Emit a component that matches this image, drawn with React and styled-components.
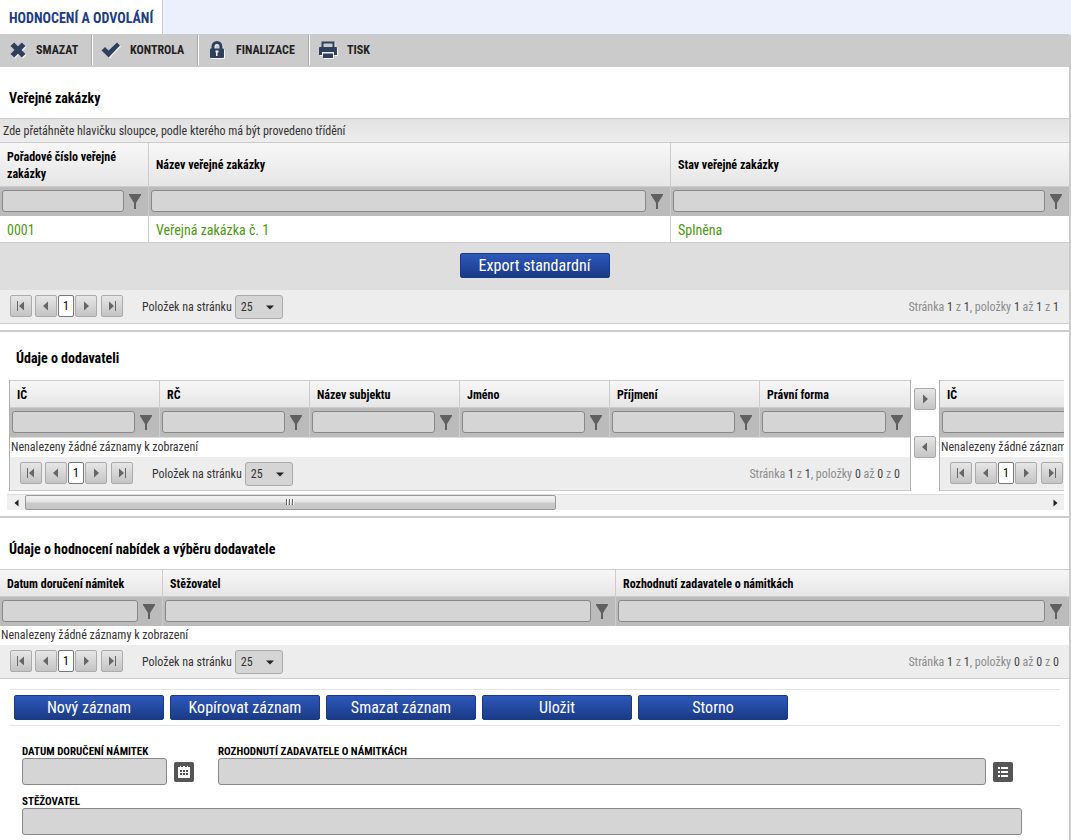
import React from 'react'
import styled, { createGlobalStyle, css } from 'styled-components'

const GlobalStyle = createGlobalStyle`
  * {
    box-sizing: border-box;
  }

  body {
    margin: 0;
    background: #fff;
    color: #333;
    font-family: 'Roboto Condensed', 'Liberation Sans Narrow', Roboto, sans-serif;
    font-size: 12px;
    line-height: 17px;
  }

  button, input, select {
    margin: 0;
    font-family: inherit;
  }
`

const TabBar = styled.nav`
  display: flex;
  height: 34px;
  background: #ebf0fc;
`

const Tab = styled.a`
  padding: 0 9px;
  border-right: 1px solid #c8c8c8;
  background: #fff;
  color: #1f3c85;
  font-size: 14px;
  font-weight: bold;
  line-height: 36px;
  text-decoration: none;
  text-transform: uppercase;
  white-space: nowrap;
`

const Toolbar = styled.div`
  display: flex;
  height: 33px;
  padding: 1px 0 2px;
  border-radius: 0 3px 0 0;
  background: #cbcbcb;
`

const ToolButton = styled.button`
  display: flex;
  align-items: center;
  gap: 9px;
  width: ${props => props.$width}px;
  padding: 0 0 0 9px;
  border: 0;
  border-right: 1px solid #a9a9a9;
  box-shadow: 1px 0 0 #fff;
  background: transparent;
  color: #222;
  font-size: 12px;
  font-weight: bold;
  text-transform: uppercase;

  &:last-child {
    border-right: 0;
    box-shadow: none;
  }

  svg {
    flex: none;
    filter: drop-shadow(1px 1px 0 #f4f4f4);
  }
`

const Page = styled.main`
  min-height: calc(100vh - 67px);
  border-right: 2px solid #ccc;
`

const Section = styled.section`
  border-bottom: 2px solid #ccc;
  padding-bottom: 6px;

  &:last-child {
    border-bottom: 0;
    padding-bottom: 4px;
  }
`

const Title = styled.h2`
  margin: 0;
  padding: ${props => props.$compact ? '16px 16px 12px' : '21px 9px 10px'};
  color: #000;
  font-size: 14px;
  font-weight: bold;
  line-height: 20px;
`

const GroupBar = styled.div`
  height: 24px;
  padding: 0 3px;
  border-top: 1px solid #ccc;
  background: linear-gradient(#e2e2e2, #ededed);
  line-height: 24px;
`

const Table = styled.table`
  width: 100%;
  border-collapse: separate;
  border-spacing: 0;
  table-layout: fixed;
`

const HeadCell = styled.th`
  height: ${props => props.$tall ? 45 : 28}px;
  padding: 2px 30px 0 7px;
  border: solid #ccc;
  border-width: 1px 1px 1px 0;
  background: linear-gradient(#f7f7f7, #e6e6e6);
  color: #000;
  font-size: 12px;
  font-weight: bold;
  text-align: left;

  &:last-child {
    border-right: 0;
  }
`

const FilterCell = styled.td`
  height: ${props => props.$lined ? 30 : 29}px;
  padding: 0 7px 1px 2px;
  border-right: 1px solid #ccc;
  border-bottom: ${props => props.$lined ? '1px solid #ddd' : 0};
  background: #bbb;

  &:last-child {
    border-right: 0;
  }

  div {
    display: flex;
    align-items: center;
    gap: 5px;
  }

  svg {
    flex: none;
  }
`

const field = css`
  border: 1px solid #888;
  border-radius: 3px;
  background: #d5d5d5;
  color: #333;
  font-size: 12px;
`

const FilterInput = styled.input`
  ${field}
  flex: 1;
  min-width: 0;
  height: 22px;
  padding: 0 4px;
`

const DataCell = styled.td`
  height: 27px;
  padding: 2px 7px 0;
  border-right: 1px solid #ccc;
  border-bottom: 1px solid #ccc;
  color: #4a9a0c;
  font-size: 14px;

  &:last-child {
    border-right: 0;
  }
`

const EmptyCell = styled.td`
  height: 19px;
  padding: 0 1px;
  white-space: nowrap;
`

const ExportBar = styled.div`
  display: flex;
  justify-content: center;
  padding: 10px 0 12px;
  background: #dedede;
`

const BlueButton = styled.button`
  width: 150px;
  height: 25px;
  padding: 0;
  border: 1px solid #1a3a85;
  border-radius: 2px;
  background: linear-gradient(#2d58bb, #1a3a85);
  color: #fff;
  font-size: 16px;
  line-height: 23px;
`

const PagerBar = styled.div`
  display: flex;
  align-items: flex-start;
  height: 34px;
  padding: 5px 10px 0;
  border-bottom: 1px solid #ccc;
  background: #ededed;
  line-height: 24px;
  white-space: nowrap;
`

const PagerButtons = styled.div`
  display: flex;
  gap: ${props => props.$gap}px;
  margin-right: ${props => props.$after || 0}px;
`

const ArrowButton = styled.button`
  display: flex;
  flex: none;
  align-items: center;
  justify-content: center;
  width: 22px;
  height: 22px;
  padding: 0;
  border: 1px solid #ababab;
  border-radius: 2px;
  background: linear-gradient(#e6e6e6, #c4c4c4);
`

const PageNumber = styled.button`
  flex: none;
  width: 16px;
  height: 22px;
  margin-right: 1px;
  padding: 0;
  border: 1px solid #777;
  border-radius: 2px;
  background: #fff;
  color: #000;
  font-size: 12px;
`

const PageSize = styled.label`
  display: flex;
  align-items: center;
  gap: 3px;
`

const SelectBox = styled.span`
  display: grid;
  align-items: center;

  > * {
    grid-area: 1 / 1;
  }

  svg {
    justify-self: end;
    margin-right: 9px;
    pointer-events: none;
  }
`

const Select = styled.select`
  ${field}
  width: 48px;
  height: 24px;
  padding: 0 5px;
  border-color: #aaa;
  appearance: none;
`

const PageInfo = styled.span`
  margin-left: auto;
  color: #8c8c8c;

  b {
    color: #444;
    font-weight: normal;
  }
`

const Transfer = styled.div`
  display: flex;
  margin: 0 5px 0 9px;
`

const GridBox = styled.div`
  flex: none;
  width: 902px;
  border: solid #b0b0b0;
  border-width: 0 1px;
`

const SideBox = styled.div`
  flex: 1;
  min-width: 0;
  overflow: hidden;
  border-left: 1px solid #b0b0b0;

  > * {
    width: 150px;
  }
`

const MoveButtons = styled.div`
  display: flex;
  flex: none;
  flex-direction: column;
  gap: 26px;
  padding: 8px 3px;
`

const Scrollbar = styled.div`
  display: flex;
  align-items: center;
  height: 16px;
  margin: 3px 5px 0 7px;
  border-top: 1px solid #ddd;
  background: #efefef;
`

const ScrollArrow = styled.button`
  display: flex;
  align-items: center;
  justify-content: center;
  width: 18px;
  height: 15px;
  padding: 0;
  border: 0;
  background: transparent;
`

const ScrollTrack = styled.div`
  flex: 1;
`

const ScrollThumb = styled.div`
  display: flex;
  align-items: center;
  justify-content: center;
  width: 52%;
  height: 15px;
  border: 1px solid #999;
  border-radius: 2px;
  background: linear-gradient(#f2f2f2 0%, #e4e4e4 45%, #cacaca 55%, #c6c6c6 100%);
`

const Actions = styled.div`
  display: flex;
  gap: 6px;
  margin: 10px 9px 0 10px;
  padding: 5px 4px;
  border: solid #e4e4e4;
  border-width: 1px 0;
`

const Form = styled.form`
  padding: 20px 47px 0 22px;
`

const FormRow = styled.div`
  display: flex;
  align-items: flex-end;
  gap: ${props => props.$gap || 0}px;
  padding-right: ${props => props.$inset || 0}px;
  margin-bottom: 11px;

  &:last-child {
    margin-bottom: 0;
  }
`

const Field = styled.div`
  display: flex;
  flex: ${props => props.$fixed ? 'none' : 1};
  flex-direction: column;
`

const FieldLabel = styled.label`
  color: #000;
  font-size: 11px;
  font-weight: bold;
  line-height: 12px;
  text-transform: uppercase;
  white-space: nowrap;
`

const FieldLine = styled.div`
  display: flex;
  align-items: center;
  gap: 7px;
`

const TextInput = styled.input`
  ${field}
  flex: ${props => props.$short ? 'none' : 1};
  width: ${props => props.$short ? '145px' : 'auto'};
  min-width: 0;
  height: 27px;
  padding: 0 5px;
`

const IconButton = styled.button`
  display: flex;
  flex: none;
  align-items: center;
  justify-content: center;
  width: 20px;
  height: 20px;
  padding: 0;
  border: 0;
  border-radius: 2px;
  background: #555;
`

const CrossIcon = () => (
  <svg width="18" height="18" viewBox="0 0 18 18">
    <path d="M5.2 1.500 9 5.2 12.8 1.500 16.500 5 12.600 9 16.500 13 12.800 16.500 9 12.800 5.200 16.500 1.500 13 5.400 9 1.500 5Z" fill="#2f405f" />
  </svg>
)

const CheckIcon = () => (
  <svg width="20" height="18" viewBox="0 0 20 18">
    <path d="M0.500 9.500 4 6 7.600 9.500 16 1.500 19 4.500 7.600 16.500Z" fill="#2f405f" />
  </svg>
)

const LockIcon = () => (
  <svg width="20" height="20" viewBox="0 0 20 20">
    <path d="M6 9V6.500a4 4 0 0 1 8 0V9" fill="none" stroke="#2f405f" strokeWidth="3" />
    <rect x="3" y="8.500" width="14" height="9.500" rx="1" fill="#2f405f" />
    <path d="M8.500 10.500h3v2h-1V16H9v-3.500h-.5Z" fill="#f0f0f0" />
  </svg>
)

const PrintIcon = () => (
  <svg width="20" height="20" viewBox="0 0 20 20">
    <path d="M4.500 7V2.500h11V7" fill="#cbcbcb" stroke="#2f405f" strokeWidth="2" />
    <path d="M1 8a1 1 0 0 1 1-1h16a1 1 0 0 1 1 1v7h-3v-3H4v3H1Z" fill="#2f405f" />
    <path d="M5 13.500h10V18H5Z" fill="#2f405f" />
    <path d="M4 12.500h12" stroke="#eee" />
  </svg>
)

const FunnelIcon = () => (
  <svg width="12" height="15" viewBox="0 0 12 15" fill="#606060">
    <path d="M0 0h12v1L7 9v6H5V9L0 1Z" />
  </svg>
)

const ArrowIcon = ({ left, bar }) => (
  <svg width="10" height="10" viewBox="0 0 10 10" fill="#666">
    <g transform={left ? 'translate(10 0) scale(-1 1)' : undefined}>
      <path d={bar ? 'M2 0.500 7 5 2 9.500ZM8 0h1v10H8Z' : 'M3 0.500 8 5 3 9.500Z'} />
    </g>
  </svg>
)

const DropIcon = () => (
  <svg width="8" height="5" viewBox="0 0 8 5">
    <path d="M0 0.500h8L4 4.500Z" fill="#222" />
  </svg>
)

const SmallArrow = ({ left }) => (
  <svg width="5" height="8" viewBox="0 0 5 8">
    <path d={left ? 'M4.500 0.500v7L0.500 4Z' : 'M0.500 0.500v7L4.500 4Z'} fill="#222" />
  </svg>
)

const GripIcon = () => (
  <svg width="9" height="7" viewBox="0 0 9 7">
    <path d="M0 0h2v6H0ZM3 0h2v6H3ZM6 0h2v6H6Z" fill="#fff" />
    <path d="M0 0h1v6H0ZM3 0h1v6H3ZM6 0h1v6H6Z" fill="#666" />
  </svg>
)

const CalendarIcon = () => (
  <svg width="14" height="14" viewBox="0 0 14 14">
    <path d="M1 2h2V1h1v1h2V1h2v1h2V1h1v1h2v11H1Z" fill="#fff" />
    <path d="M3 5h2v2H3ZM6 5h2v2H6ZM9 5h2v2H9ZM3 8h2v2H3ZM6 8h2v2H6ZM9 8h2v2H9Z" fill="#555" />
  </svg>
)

const ListIcon = () => (
  <svg width="10" height="10" viewBox="0 0 10 10" fill="#fff">
    <path d="M0 0h2v2H0ZM3 0h7v2H3ZM0 4h2v2H0ZM3 4h7v2H3ZM0 8h2v2H0ZM3 8h7v2H3Z" />
  </svg>
)

function PageButtons() {
  return (
    <>
      <PagerButtons $gap={3} $after={1}>
        <ArrowButton type="button" aria-label="První stránka"><ArrowIcon left bar /></ArrowButton>
        <ArrowButton type="button" aria-label="Předchozí stránka"><ArrowIcon left /></ArrowButton>
      </PagerButtons>
      <PageNumber type="button">1</PageNumber>
      <PagerButtons $gap={4} $after={19}>
        <ArrowButton type="button" aria-label="Další stránka"><ArrowIcon /></ArrowButton>
        <ArrowButton type="button" aria-label="Poslední stránka"><ArrowIcon bar /></ArrowButton>
      </PagerButtons>
    </>
  )
}

function Pager({ from, to, total }) {
  return (
    <PagerBar>
      <PageButtons />
      <PageSize>
        Položek na stránku
        <SelectBox>
          <Select defaultValue="25">
            <option>25</option>
            <option>50</option>
          </Select>
          <DropIcon />
        </SelectBox>
      </PageSize>
      <PageInfo>
        Stránka <b>1</b> z <b>1</b>, položky <b>{from}</b> až <b>{to}</b> z <b>{total}</b>
      </PageInfo>
    </PagerBar>
  )
}

function Grid({ columns, widths = [], rows = [], tall, lined }) {
  return (
    <Table>
      <colgroup>
        {columns.map((name, i) => <col key={name} width={widths[i]} />)}
      </colgroup>
      <thead>
        <tr>
          {columns.map(name => <HeadCell key={name} $tall={tall}>{name}</HeadCell>)}
        </tr>
      </thead>
      <tbody>
        <tr>
          {columns.map(name => (
            <FilterCell key={name} $lined={lined}>
              <div>
                <FilterInput type="text" aria-label={name} />
                <FunnelIcon />
              </div>
            </FilterCell>
          ))}
        </tr>
        {rows.map(row => (
          <tr key={row[0]}>
            {row.map(value => <DataCell key={value}>{value}</DataCell>)}
          </tr>
        ))}
        {rows.length === 0 && (
          <tr>
            <EmptyCell colSpan={columns.length}>Nenalezeny žádné záznamy k zobrazení</EmptyCell>
          </tr>
        )}
      </tbody>
    </Table>
  )
}

function App() {
  return (
    <>
      <GlobalStyle />
      <TabBar>
        <Tab href="#hodnoceni">Hodnocení a odvolání</Tab>
      </TabBar>
      <Toolbar>
        <ToolButton type="button" $width={92}><CrossIcon />Smazat</ToolButton>
        <ToolButton type="button" $width={106}><CheckIcon />Kontrola</ToolButton>
        <ToolButton type="button" $width={111}><LockIcon />Finalizace</ToolButton>
        <ToolButton type="button" $width={80}><PrintIcon />Tisk</ToolButton>
      </Toolbar>
      <Page>
        <Section>
          <Title>Veřejné zakázky</Title>
          <GroupBar>Zde přetáhněte hlavičku sloupce, podle kterého má být provedeno třídění</GroupBar>
          <Grid
            tall
            columns={['Pořadové číslo veřejné zakázky', 'Název veřejné zakázky', 'Stav veřejné zakázky']}
            widths={[149, 522]}
            rows={[['0001', 'Veřejná zakázka č. 1', 'Splněna']]}
          />
          <ExportBar>
            <BlueButton type="button">Export standardní</BlueButton>
          </ExportBar>
          <Pager from={1} to={1} total={1} />
        </Section>

        <Section>
          <Title $compact>Údaje o dodavateli</Title>
          <Transfer>
            <GridBox>
              <Grid lined columns={['IČ', 'RČ', 'Název subjektu', 'Jméno', 'Příjmení', 'Právní forma']} />
              <Pager from={0} to={0} total={0} />
            </GridBox>
            <MoveButtons>
              <ArrowButton type="button" aria-label="Přidat"><ArrowIcon /></ArrowButton>
              <ArrowButton type="button" aria-label="Odebrat"><ArrowIcon left /></ArrowButton>
            </MoveButtons>
            <SideBox>
              <Grid lined columns={['IČ']} />
              <PagerBar>
                <PageButtons />
              </PagerBar>
            </SideBox>
          </Transfer>
          <Scrollbar>
            <ScrollArrow type="button" aria-label="Posunout vlevo"><SmallArrow left /></ScrollArrow>
            <ScrollTrack>
              <ScrollThumb><GripIcon /></ScrollThumb>
            </ScrollTrack>
            <ScrollArrow type="button" aria-label="Posunout vpravo"><SmallArrow /></ScrollArrow>
          </Scrollbar>
        </Section>

        <Section>
          <Title>Údaje o hodnocení nabídek a výběru dodavatele</Title>
          <Grid
            columns={['Datum doručení námitek', 'Stěžovatel', 'Rozhodnutí zadavatele o námitkách']}
            widths={[163]}
          />
          <Pager from={0} to={0} total={0} />
          <Actions>
            <BlueButton type="button">Nový záznam</BlueButton>
            <BlueButton type="button">Kopírovat záznam</BlueButton>
            <BlueButton type="button">Smazat záznam</BlueButton>
            <BlueButton type="button">Uložit</BlueButton>
            <BlueButton type="button">Storno</BlueButton>
          </Actions>
          <Form>
            <FormRow $gap={24} $inset={9}>
              <Field $fixed>
                <FieldLabel htmlFor="datum">Datum doručení námitek</FieldLabel>
                <FieldLine>
                  <TextInput id="datum" type="text" $short />
                  <IconButton type="button" aria-label="Kalendář"><CalendarIcon /></IconButton>
                </FieldLine>
              </Field>
              <Field>
                <FieldLabel htmlFor="rozhodnuti">Rozhodnutí zadavatele o námitkách</FieldLabel>
                <FieldLine>
                  <TextInput id="rozhodnuti" type="text" />
                  <IconButton type="button" aria-label="Seznam"><ListIcon /></IconButton>
                </FieldLine>
              </Field>
            </FormRow>
            <FormRow>
              <Field>
                <FieldLabel htmlFor="stezovatel">Stěžovatel</FieldLabel>
                <FieldLine>
                  <TextInput id="stezovatel" type="text" />
                </FieldLine>
              </Field>
            </FormRow>
          </Form>
        </Section>
      </Page>
    </>
  )
}

export default App
